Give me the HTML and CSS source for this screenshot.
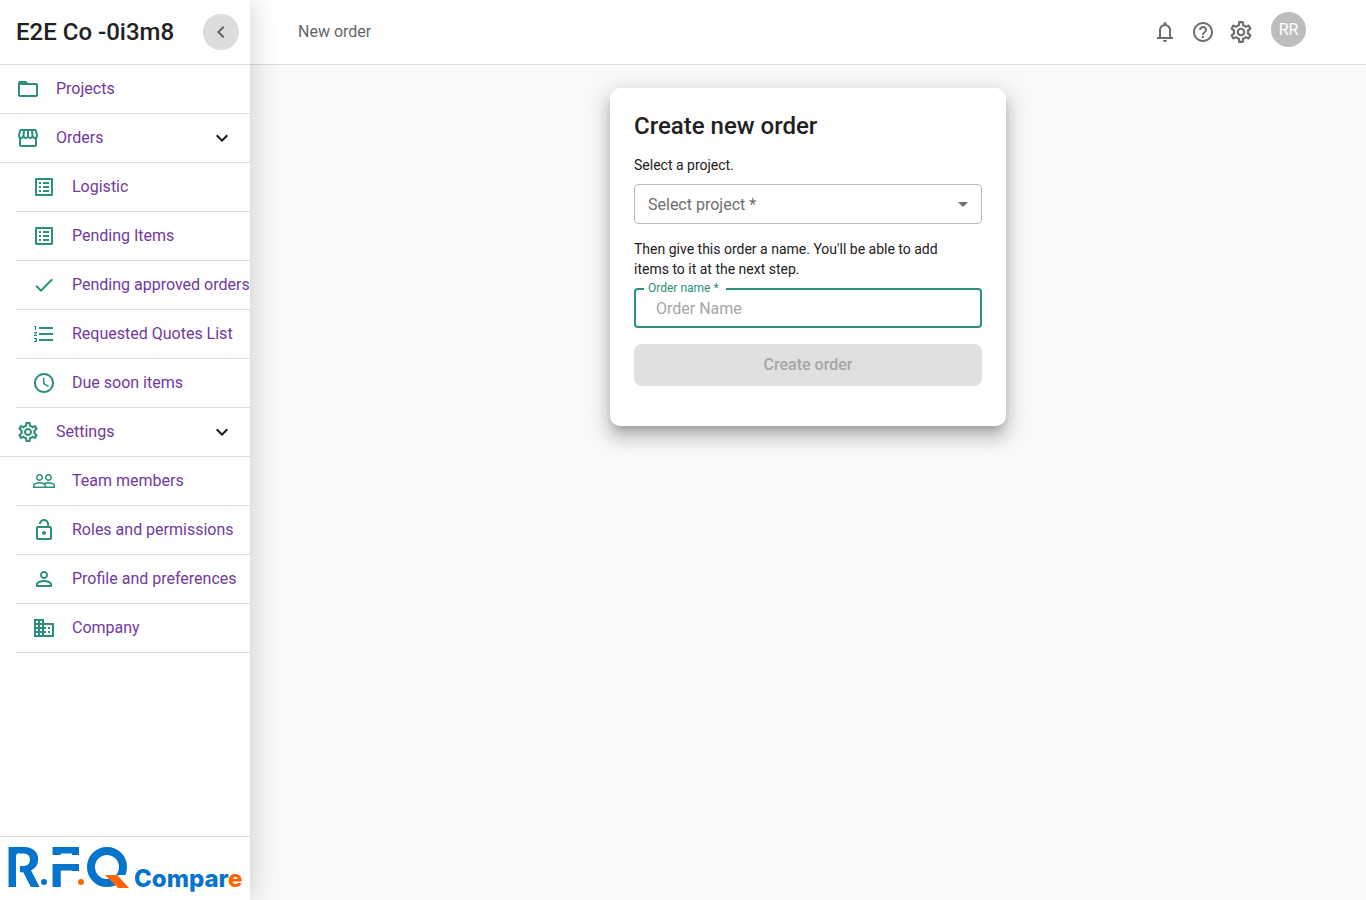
FILE: index.html
```html
<!DOCTYPE html>
<html lang="en">
<head>
<meta charset="utf-8">
<meta name="viewport" content="width=device-width, initial-scale=1">
<title>New order</title>
<link rel="stylesheet" href="styles.css">
</head>
<body>
<div class="app">
  <aside class="sidebar">
    <div class="sidebar-head">
      <span class="company">E2E Co -0i3m8</span>
      <button class="collapse" type="button" aria-label="Collapse menu"><svg class="icon" viewBox="0 0 24 24"><path d="M15.41 7.41 14 6l-6 6 6 6 1.41-1.41L10.83 12z"/></svg></button>
    </div>
    <nav class="nav">
      <ul class="menu">
        <li><a class="item" href="#"><svg class="icon" viewBox="0 0 24 24"><path d="M20 6h-8l-2-2H4c-1.1 0-1.99.9-1.99 2L2 18c0 1.1.9 2 2 2h16c1.1 0 2-.9 2-2V8c0-1.1-.9-2-2-2zm0 12H4V8h16v10z"/></svg><span>Projects</span></a></li>
        <li>
          <button class="item" type="button" aria-expanded="true"><svg class="icon" viewBox="0 0 24 24"><path d="M21.9 8.89l-1.05-4.37c-.22-.9-1-1.52-1.91-1.52H5.05c-.9 0-1.69.63-1.9 1.52L2.1 8.89c-.24 1.02-.02 2.06.62 2.88.08.11.19.19.28.29V19c0 1.1.9 2 2 2h14c1.1 0 2-.9 2-2v-6.94c.09-.09.2-.18.28-.28.64-.82.87-1.87.62-2.89zm-2.99-3.9l1.05 4.37c.1.42.01.84-.25 1.17-.14.18-.44.47-.94.47-.61 0-1.14-.49-1.21-1.14L16.98 5l1.93-.01zM13 5h1.96l.54 4.52c.05.39-.07.78-.33 1.07-.22.26-.54.41-.95.41-.67 0-1.22-.59-1.22-1.31V5zM8.49 9.52L9.04 5H11v4.69c0 .72-.55 1.31-1.29 1.31-.34 0-.65-.15-.89-.41-.25-.29-.37-.68-.33-1.07zm-4.45-.16L5.05 5h1.97l-.58 4.86c-.08.65-.6 1.14-1.21 1.14-.49 0-.8-.29-.93-.47-.27-.32-.36-.75-.26-1.17zM5 19v-6.03c.08.01.15.03.23.03.87 0 1.66-.36 2.24-.95.6.6 1.4.95 2.31.95.87 0 1.65-.36 2.23-.93.59.57 1.39.93 2.29.93.84 0 1.64-.35 2.24-.95.58.59 1.37.95 2.24.95.08 0 .15-.02.23-.03V19H5z"/></svg><span>Orders</span><svg class="icon chevron" viewBox="0 0 24 24"><path d="M16.59 8.59 12 13.17 7.41 8.59 6 10l6 6 6-6z"/></svg></button>
          <ul class="submenu">
            <li><a class="item" href="#"><svg class="icon" viewBox="0 0 24 24"><path d="M19 5v14H5V5h14m1.1-2H3.9c-.5 0-.9.4-.9.9v16.2c0 .4.4.9.9.9h16.2c.4 0 .9-.5.9-.9V3.9c0-.5-.5-.9-.9-.9zM11 7h6v2h-6V7zm0 4h6v2h-6v-2zm0 4h6v2h-6zM7 7h2v2H7zm0 4h2v2H7zm0 4h2v2H7z"/></svg><span>Logistic</span></a></li>
            <li><a class="item" href="#"><svg class="icon" viewBox="0 0 24 24"><path d="M19 5v14H5V5h14m1.1-2H3.9c-.5 0-.9.4-.9.9v16.2c0 .4.4.9.9.9h16.2c.4 0 .9-.5.9-.9V3.9c0-.5-.5-.9-.9-.9zM11 7h6v2h-6V7zm0 4h6v2h-6v-2zm0 4h6v2h-6zM7 7h2v2H7zm0 4h2v2H7zm0 4h2v2H7z"/></svg><span>Pending Items</span></a></li>
            <li><a class="item" href="#"><svg class="icon" viewBox="0 0 24 24"><path d="M9 16.17 4.83 12l-1.42 1.41L9 19 21 7l-1.41-1.41z"/></svg><span>Pending approved orders</span></a></li>
            <li><a class="item" href="#"><svg class="icon" viewBox="0 0 24 24"><path d="M2 17h2v.5H3v1h1v.5H2v1h3v-4H2v1zm1-9h1V4H2v1h1v3zm-1 3h1.8L2 13.1v.9h3v-1H3.2L5 10.9V10H2v1zm5-6v2h14V5H7zm0 14h14v-2H7v2zm0-6h14v-2H7v2z"/></svg><span>Requested Quotes List</span></a></li>
            <li><a class="item" href="#"><svg class="icon" viewBox="0 0 24 24"><path d="M11.99 2C6.47 2 2 6.48 2 12s4.47 10 9.99 10C17.52 22 22 17.52 22 12S17.52 2 11.99 2zM12 20c-4.42 0-8-3.58-8-8s3.58-8 8-8 8 3.58 8 8-3.58 8-8 8zm.5-13H11v6l5.25 3.15.75-1.23-4.5-2.67z"/></svg><span>Due soon items</span></a></li>
          </ul>
        </li>
        <li>
          <button class="item" type="button" aria-expanded="true"><svg class="icon" viewBox="0 0 24 24"><path id="gear" d="M19.43 12.98c.04-.32.07-.64.07-.98 0-.34-.03-.66-.07-.98l2.11-1.65c.19-.15.24-.42.12-.64l-2-3.46c-.09-.16-.26-.25-.44-.25-.06 0-.12.01-.17.03l-2.49 1c-.52-.4-1.08-.73-1.69-.98l-.38-2.65C14.46 2.18 14.25 2 14 2h-4c-.25 0-.46.18-.49.42l-.38 2.65c-.61.25-1.17.59-1.69.98l-2.49-1c-.06-.02-.12-.03-.18-.03-.17 0-.34.09-.43.25l-2 3.46c-.13.22-.07.49.12.64l2.11 1.65c-.04.32-.07.65-.07.98 0 .33.03.66.07.98l-2.11 1.65c-.19.15-.24.42-.12.64l2 3.46c.09.16.26.25.44.25.06 0 .12-.01.17-.03l2.49-1c.52.4 1.08.73 1.69.98l.38 2.65c.03.24.24.42.49.42h4c.25 0 .46-.18.49-.42l.38-2.65c.61-.25 1.17-.59 1.69-.98l2.49 1c.06.02.12.03.18.03.17 0 .34-.09.43-.25l2-3.46c.12-.22.07-.49-.12-.64l-2.11-1.65zm-1.98-1.71c.04.31.05.52.05.73 0 .21-.02.43-.05.73l-.14 1.13.89.7 1.08.84-.7 1.21-1.27-.51-1.04-.42-.9.68c-.43.32-.84.56-1.25.73l-1.06.43-.16 1.13-.2 1.35h-1.4l-.19-1.35-.16-1.13-1.06-.43c-.43-.18-.83-.41-1.23-.71l-.91-.7-1.06.43-1.27.51-.7-1.21 1.08-.84.89-.7-.14-1.13c-.03-.31-.05-.54-.05-.74s.02-.43.05-.73l.14-1.13-.89-.7-1.08-.84.7-1.21 1.27.51 1.04.42.9-.68c.43-.32.84-.56 1.25-.73l1.06-.43.16-1.13.2-1.35h1.39l.19 1.35.16 1.13 1.06.43c.43.18.83.41 1.23.71l.91.7 1.06-.43 1.27-.51.7 1.21-1.07.85-.89.7.14 1.13zM12 8c-2.21 0-4 1.79-4 4s1.79 4 4 4 4-1.79 4-4-1.79-4-4-4zm0 6c-1.1 0-2-.9-2-2s.9-2 2-2 2 .9 2 2-.9 2-2 2z"/></svg><span>Settings</span><svg class="icon chevron" viewBox="0 0 24 24"><path d="M16.59 8.59 12 13.17 7.41 8.59 6 10l6 6 6-6z"/></svg></button>
          <ul class="submenu">
            <li><a class="item" href="#"><svg class="icon" viewBox="0 0 24 24"><path d="M16.5 13c-1.2 0-3.07.34-4.5 1-1.43-.67-3.3-1-4.5-1C5.33 13 1 14.08 1 16.25V19h22v-2.75c0-2.17-4.33-3.25-6.5-3.25zm-4 4.5h-10v-1.25c0-.54 2.56-1.75 5-1.75s5 1.21 5 1.75v1.25zm9 0H14v-1.25c0-.46-.2-.86-.52-1.22.88-.3 1.96-.53 3.02-.53 2.44 0 5 1.21 5 1.75v1.25zM7.5 12c1.93 0 3.5-1.57 3.5-3.5S9.43 5 7.5 5 4 6.57 4 8.5 5.57 12 7.5 12zm0-5.5c1.1 0 2 .9 2 2s-.9 2-2 2-2-.9-2-2 .9-2 2-2zm9 5.5c1.93 0 3.5-1.57 3.5-3.5S18.43 5 16.5 5 13 6.57 13 8.5s1.57 3.5 3.5 3.5zm0-5.5c1.1 0 2 .9 2 2s-.9 2-2 2-2-.9-2-2 .9-2 2-2z"/></svg><span>Team members</span></a></li>
            <li><a class="item" href="#"><svg class="icon" viewBox="0 0 24 24"><path d="M12 17c1.1 0 2-.9 2-2s-.9-2-2-2-2 .9-2 2 .9 2 2 2zm6-9h-1V6c0-2.76-2.24-5-5-5S7 3.24 7 6h1.9c0-1.71 1.39-3.1 3.1-3.1 1.71 0 3.1 1.39 3.1 3.1v2H6c-1.1 0-2 .9-2 2v10c0 1.1.9 2 2 2h12c1.1 0 2-.9 2-2V10c0-1.1-.9-2-2-2zm0 12H6V10h12v10z"/></svg><span>Roles and permissions</span></a></li>
            <li><a class="item" href="#"><svg class="icon" viewBox="0 0 24 24"><path d="M12 5.9c1.16 0 2.1.94 2.1 2.1s-.94 2.1-2.1 2.1S9.9 9.16 9.9 8s.94-2.1 2.1-2.1m0 9c2.97 0 6.1 1.46 6.1 2.1v1.1H5.9V17c0-.64 3.13-2.1 6.1-2.1M12 4C9.79 4 8 5.79 8 8s1.79 4 4 4 4-1.79 4-4-1.79-4-4-4zm0 9c-2.67 0-8 1.34-8 4v3h16v-3c0-2.66-5.33-4-8-4z"/></svg><span>Profile and preferences</span></a></li>
            <li><a class="item" href="#"><svg class="icon" viewBox="0 0 24 24"><path d="M12 7V3H2v18h20V7H12zM6 19H4v-2h2v2zm0-4H4v-2h2v2zm0-4H4V9h2v2zm0-4H4V5h2v2zm4 12H8v-2h2v2zm0-4H8v-2h2v2zm0-4H8V9h2v2zm0-4H8V5h2v2zm10 12h-8v-2h2v-2h-2v-2h2v-2h-2V9h8v10zm-2-8h-2v2h2v-2zm0 4h-2v2h2v-2z"/></svg><span>Company</span></a></li>
          </ul>
        </li>
      </ul>
    </nav>
    <div class="sidebar-foot">
      <svg class="logo" viewBox="0 0 250 63" role="img" aria-label="R.F.Q Compare">
        <g class="logo-blue">
          <text class="logo-big" x="5" y="50">R</text>
          <circle cx="44" cy="45" r="3"/>
          <text class="logo-big" x="49" y="50">F</text>
          <rect x="72" y="10" width="7" height="8"/>
          <rect x="72" y="27" width="7" height="7"/>
        </g>
        <rect class="logo-gap" x="16" y="18" width="4" height="33"/>
        <rect class="logo-gap" x="50" y="18" width="30" height="9"/>
        <circle class="logo-orange" cx="81" cy="45" r="3"/>
        <circle class="logo-ring" cx="107" cy="30" r="16"/>
        <path class="logo-gap" d="M117 38h13v13h-2z"/>
        <path class="logo-orange" d="M105 38h12l12 13h-11z"/>
        <text class="logo-small" x="134" y="50"><tspan class="logo-blue">Compar</tspan><tspan class="logo-orange">e</tspan></text>
      </svg>
    </div>
  </aside>
  <div class="page">
    <header class="topbar">
      <span class="crumb">New order</span>
      <div class="actions">
        <button type="button" aria-label="Notifications"><svg class="icon" viewBox="0 0 24 24"><path d="M4 19v-2h2v-7q0-2.075 1.25-3.688Q8.5 4.7 10.5 4.2v-.7q0-.625.438-1.063Q11.375 2 12 2t1.063.437q.437.438.437 1.063v.7q2 .5 3.25 2.112Q18 7.925 18 10v7h2v2Zm8 3q-.825 0-1.412-.587Q10 20.825 10 20h4q0 .825-.587 1.413Q12.825 22 12 22Zm-4-5h8v-7q0-1.65-1.175-2.825Q13.65 6 12 6q-1.65 0-2.825 1.175Q8 8.35 8 10Z"/></svg></button>
        <button type="button" aria-label="Help"><svg class="icon" viewBox="0 0 24 24"><path d="M11 18h2v-2h-2v2zm1-16C6.48 2 2 6.48 2 12s4.48 10 10 10 10-4.48 10-10S17.52 2 12 2zm0 18c-4.41 0-8-3.59-8-8s3.59-8 8-8 8 3.59 8 8-3.59 8-8 8zm0-14c-2.21 0-4 1.79-4 4h2c0-1.1.9-2 2-2s2 .9 2 2c0 2-3 1.75-3 5h2c0-2.25 3-2.5 3-5 0-2.21-1.79-4-4-4z"/></svg></button>
        <button type="button" aria-label="Settings"><svg class="icon" viewBox="1 1 22 22"><use href="#gear"/></svg></button>
        <button class="avatar" type="button" aria-label="Account RR">RR</button>
      </div>
    </header>
    <main class="content">
      <form class="card">
        <h1>Create new order</h1>
        <label class="hint" for="project">Select a project.</label>
        <div class="select">
          <select id="project" required>
            <option value="">Select project *</option>
          </select>
          <svg class="icon caret" viewBox="0 0 24 24"><path d="m7 10 5 5 5-5z"/></svg>
        </div>
        <p class="hint">Then give this order a name. You'll be able to add items to it at the next step.</p>
        <div class="field">
          <label for="order-name">Order name *</label>
          <input id="order-name" type="text" placeholder="Order Name" required>
        </div>
        <button class="submit" type="submit" disabled>Create order</button>
      </form>
    </main>
  </div>
</div>
</body>
</html>
```
FILE: styles.css
```css
* {
  box-sizing: border-box;
}

body {
  margin: 0;
  background: #f9f9f9;
  color: #212121;
  font-family: Roboto, "Liberation Sans", sans-serif;
  font-size: 16px;
  line-height: 24px;
}

button,
input,
select {
  font: inherit;
}

button {
  padding: 0;
  border: 0;
  background: none;
}

ul {
  margin: 0;
  padding: 0;
  list-style: none;
}

.icon {
  display: block;
  flex: none;
  width: 24px;
  height: 24px;
  fill: currentColor;
}

.app {
  display: flex;
  min-height: 100vh;
}

.sidebar {
  position: sticky;
  top: 0;
  z-index: 1;
  display: flex;
  flex: none;
  flex-direction: column;
  width: 250px;
  height: 100vh;
  background: #fff;
  box-shadow: 0 0 28px rgba(0, 0, 0, 0.2);
}

.sidebar-head {
  display: flex;
  flex: none;
  align-items: center;
  justify-content: space-between;
  height: 65px;
  padding: 0 11px 0 16px;
  border-bottom: 1px solid #dcdcdc;
}

.company {
  font-size: 24px;
  font-weight: 500;
}

.collapse {
  display: grid;
  place-items: center;
  width: 36px;
  height: 36px;
  border-radius: 50%;
  background: #dcdcdc;
  color: #616161;
}

.nav {
  flex: 1;
  overflow: hidden;
}

.submenu {
  padding-left: 16px;
}

.item {
  display: flex;
  align-items: center;
  gap: 16px;
  width: 100%;
  height: 49px;
  padding: 0 16px;
  border-bottom: 1px solid #dcdcdc;
  color: #7239a0;
  text-align: left;
  text-decoration: none;
  white-space: nowrap;
}

.item .icon {
  color: #2a8f7c;
}

.item .chevron {
  margin-left: auto;
  color: #1a1a1a;
}

.sidebar-foot {
  flex: none;
  border-top: 1px solid #dcdcdc;
}

.logo {
  display: block;
  width: 100%;
  overflow: visible;
}

.logo-blue {
  fill: #0474cd;
}

.logo-orange {
  fill: #ff6600;
}

.logo-gap {
  fill: #fff;
}

.logo-ring {
  fill: none;
  stroke: #0474cd;
  stroke-width: 8px;
}

.logo-big {
  font-size: 56px;
  font-weight: 700;
}

.logo-small {
  font-family: Inter, sans-serif;
  font-size: 24px;
  font-weight: 800;
}

.page {
  display: flex;
  flex: 1;
  flex-direction: column;
  min-width: 0;
}

.topbar {
  display: flex;
  align-items: center;
  justify-content: space-between;
  height: 65px;
  padding: 0 60px 0 48px;
  border-bottom: 1px solid #dcdcdc;
  background: #fff;
}

.crumb {
  color: #666;
}

.actions {
  display: flex;
  align-items: center;
  gap: 14px;
  color: #6e6e6e;
}

.actions button {
  color: inherit;
}

.actions .avatar {
  width: 35px;
  height: 35px;
  margin: 0 0 5px 4px;
  border-radius: 50%;
  background: #bdbdbd;
  color: #fff;
}

.content {
  display: flex;
  justify-content: center;
  padding: 23px 24px;
}

.card {
  display: flex;
  flex-direction: column;
  width: 396px;
  padding: 24px 24px 40px;
  border-radius: 10px;
  background: #fff;
  box-shadow: 0 7px 8px -4px rgba(0, 0, 0, 0.2), 0 12px 17px 2px rgba(0, 0, 0, 0.14), 0 5px 22px 4px rgba(0, 0, 0, 0.12);
}

.card h1 {
  margin: 0 0 15px;
  font-size: 24px;
  font-weight: 500;
  line-height: 28px;
}

.hint {
  margin: 0 0 9px;
  padding-right: 16px;
  font-size: 14px;
  line-height: 20px;
}

.select {
  position: relative;
  margin-bottom: 15px;
}

.select select {
  display: block;
  width: 100%;
  height: 40px;
  padding: 2px 32px 0 13px;
  border: 1px solid #bdbdbd;
  border-radius: 4px;
  background: #fff;
  color: #6e6e6e;
  appearance: none;
}

.caret {
  position: absolute;
  top: 8px;
  right: 7px;
  color: #6e6e6e;
  pointer-events: none;
}

.field {
  position: relative;
  margin-bottom: 16px;
}

.field label {
  position: absolute;
  top: -8px;
  left: 10px;
  padding: 0 7px 0 4px;
  background: #fff;
  color: #2a8f7c;
  font-size: 12px;
  line-height: 16px;
}

.field input {
  display: block;
  width: 100%;
  height: 40px;
  padding: 0 20px;
  border: 2px solid #2a8f7c;
  border-radius: 4px;
  outline: 0;
  background: #fff;
  color: #212121;
}

.field input::placeholder {
  color: #a6a6a6;
}

.submit {
  height: 42px;
  border-radius: 8px;
  background: #e0e0e0;
  color: #a6a6a6;
  font-weight: 500;
}
```
